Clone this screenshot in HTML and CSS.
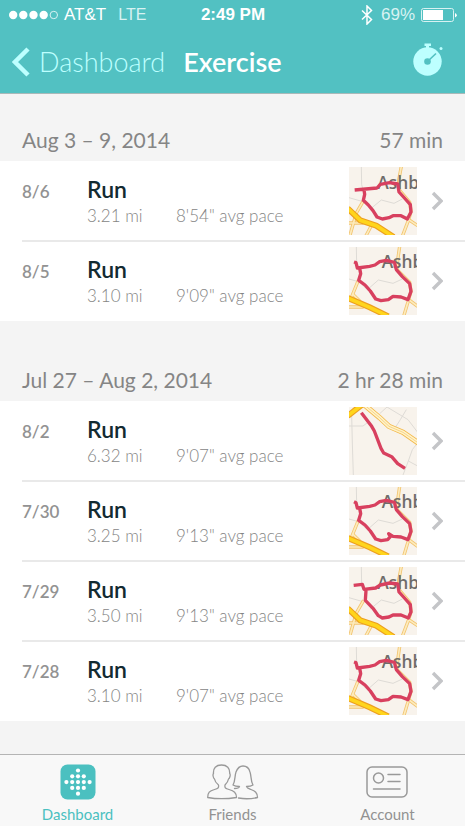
FILE: index.html
```html
<!DOCTYPE html>
<html lang="en">
<head>
    <meta charset="UTF-8">
    <meta name="viewport" content="width=device-width, initial-scale=1.0">
    <title>Exercise</title>
    <link rel="stylesheet" href="styles.css">
</head>
<body>
    <!-- shared map tiles, routes and icons -->
    <svg class="sprite" aria-hidden="true">
        <symbol id="map-west" viewBox="28 22 204 204">
            <rect x="28" y="22" width="204" height="204" fill="#f8f3ec"/>
            <path class="street" d="M65 22L66 75L70 90M28 114L70 126M92 148L125 121L163 131L188 118"/>
            <path class="road-edge" d="M185 20L177 62L178 90L210 128L214 155L207 180L188 230M207 180L234 198M72 122L50 160L30 230M28 190H72M48 162L68 190M95 198L78 230"/>
            <path class="road" d="M185 20L177 62L178 90L210 128L214 155L207 180L188 230M207 180L234 198M72 122L50 160L30 230M28 190H72M48 162L68 190M95 198L78 230"/>
            <path class="highway-edge" d="M24 146L62 182L110 198L162 232"/>
            <path class="highway" d="M24 146L62 182L110 198L162 232"/>
        </symbol>
        <symbol id="map-east" viewBox="28 22 204 204">
            <rect x="28" y="22" width="204" height="204" fill="#f8f3ec"/>
            <path class="street" d="M50 22L51 75M28 118L56 126M78 136L90 144L116 121L160 131L188 118M66 134L120 185"/>
            <path class="road-edge" d="M180 20L174 62L172 90L210 128L214 155L207 180L192 230M207 180L234 200M56 122L30 186M40 164L62 186M28 202H72"/>
            <path class="road" d="M180 20L174 62L172 90L210 128L214 155L207 180L192 230M207 180L234 200M56 122L30 186M40 164L62 186M28 202H72"/>
            <path class="highway-edge" d="M24 175L90 203L146 230"/>
            <path class="highway" d="M24 175L90 203L146 230"/>
        </symbol>
        <symbol id="map-long" viewBox="28 22 204 204">
            <rect x="28" y="22" width="204" height="204" fill="#f8f3ec"/>
            <path class="street" d="M36 46L38 130L41 226M28 79H70L86 67M120 42L142 22L205 60L234 98M200 30L182 60L168 82M232 132L218 150L206 184L190 226M206 184L232 198"/>
            <path class="avenue-edge" d="M72 14L120 54L148 80L190 98L236 130"/>
            <path class="avenue" d="M72 14L120 54L148 80L190 98L236 130"/>
            <path class="avenue-line" d="M72 14L120 54L148 80L190 98L236 130"/>
            <path class="highway-edge" d="M24 49L66 16"/>
            <path class="highway" d="M24 49L66 16"/>
        </symbol>
        <symbol id="route-loop-east" viewBox="28 22 204 204">
            <path class="route" d="M43 67L49 69L53 85L90 80L106 76L120 66L140 62L164 68L170 90L188 111L210 132L214 155L205 180L184 172L160 170L146 180L124 183L108 178L92 154L76 136L57 122L63 102L60 86"/>
        </symbol>
        <symbol id="icon-chevron" viewBox="0 0 12 20">
            <path d="M2 2L10 10L2 18" fill="none" stroke="#c4c5c8" stroke-width="3.4"/>
        </symbol>
    </svg>

    <header class="top-bar">
        <div class="status-bar">
            <div class="status-left">
                <svg class="signal" viewBox="0 0 49 10" role="img" aria-label="Signal, 4 of 5">
                    <g fill="#fff">
                        <circle cx="4.2" cy="5" r="4.2"/>
                        <circle cx="14.3" cy="5" r="4.2"/>
                        <circle cx="24.5" cy="5" r="4.2"/>
                        <circle cx="34.7" cy="5" r="4.2"/>
                    </g>
                    <circle cx="44.8" cy="5" r="3.7" fill="none" stroke="#d8f2f2"/>
                </svg>
                <span>AT&amp;T</span>
                <span class="network">LTE</span>
            </div>
            <div class="clock">2:49 PM</div>
            <div class="status-right">
                <svg class="bluetooth" viewBox="0 0 12 20" aria-hidden="true">
                    <path d="M1 5.5L10.5 14.5L6 19V1L10.5 5.5L1 14.5" fill="none" stroke="#fff" stroke-width="1.5"/>
                </svg>
                <span class="percent">69%</span>
                <svg class="battery" viewBox="0 0 36 14" role="img" aria-label="Battery">
                    <rect x="0.5" y="0.5" width="32" height="13" rx="2" fill="none" stroke="#d8f2f2"/>
                    <rect x="2" y="2" width="20" height="10" fill="#fff"/>
                    <path d="M34 5V9.5Q35.8 8.5 35.8 7.2Q35.8 6 34 5Z" fill="#fff"/>
                </svg>
            </div>
        </div>
        <nav class="nav-bar">
            <a class="back" href="#">
                <svg viewBox="0 0 18 30" aria-hidden="true">
                    <path d="M16 2L3 15L16 28" fill="none" stroke="#bdffff" stroke-width="4.5"/>
                </svg>
                Dashboard
            </a>
            <h1>Exercise</h1>
            <button class="timer" type="button" aria-label="Start timer">
                <svg viewBox="0 0 30 33" aria-hidden="true">
                    <circle cx="14.5" cy="18.5" r="14.2" fill="#bdffff"/>
                    <path d="M11.500 0.500H18V3H16V5.500H13V3H11.500Z" fill="#bdffff"/>
                    <circle cx="28" cy="5.5" r="1.5" fill="#bdffff"/>
                    <path d="M14.5 18.5L23 10.5" stroke="#52c1c2" stroke-width="1.6"/>
                    <circle cx="14.5" cy="18.5" r="3.3" fill="#52c1c2"/>
                </svg>
            </button>
        </nav>
    </header>

    <main>
        <section>
            <div class="week">
                <h2>Aug 3 – 9, 2014</h2>
                <span>57 min</span>
            </div>
            <ul class="runs">
                <li>
                    <a class="run" href="#">
                        <span class="date">8/6</span>
                        <span class="info">
                            <strong>Run</strong>
                            <span>3.21 mi</span>
                            <span>8'54" avg pace</span>
                        </span>
                        <svg class="map" viewBox="28 22 204 204" aria-hidden="true">
                            <use href="#map-west" x="28" y="22" width="204" height="204"/>
                            <text class="place" x="113" y="88">Ashb</text>
                            <path class="route" d="M45 91L112 85L122 74L150 69L174 73L178 97L197 118L212 135L214 157L203 178L184 168L160 168L148 174L128 178L112 172L100 153L86 136L71 122L75 104L73 90"/>
                        </svg>
                        <svg class="chevron" aria-hidden="true"><use href="#icon-chevron"/></svg>
                    </a>
                </li>
                <li>
                    <a class="run" href="#">
                        <span class="date">8/5</span>
                        <span class="info">
                            <strong>Run</strong>
                            <span>3.10 mi</span>
                            <span>9'09" avg pace</span>
                        </span>
                        <svg class="map" viewBox="28 22 204 204" aria-hidden="true">
                            <use href="#map-east" x="28" y="22" width="204" height="204"/>
                            <text class="place" x="126" y="85">Ashb</text>
                            <use href="#route-loop-east" x="28" y="22" width="204" height="204"/>
                        </svg>
                        <svg class="chevron" aria-hidden="true"><use href="#icon-chevron"/></svg>
                    </a>
                </li>
            </ul>
        </section>

        <section>
            <div class="week">
                <h2>Jul 27 – Aug 2, 2014</h2>
                <span>2 hr 28 min</span>
            </div>
            <ul class="runs">
                <li>
                    <a class="run" href="#">
                        <span class="date">8/2</span>
                        <span class="info">
                            <strong>Run</strong>
                            <span>6.32 mi</span>
                            <span>9'07" avg pace</span>
                        </span>
                        <svg class="map" viewBox="28 22 204 204" aria-hidden="true">
                            <use href="#map-long" x="28" y="22" width="204" height="204"/>
                            <path class="route" d="M65 39L96 80L104 94L124 146L132 160L156 171L174 192L196 206"/>
                        </svg>
                        <svg class="chevron" aria-hidden="true"><use href="#icon-chevron"/></svg>
                    </a>
                </li>
                <li>
                    <a class="run" href="#">
                        <span class="date">7/30</span>
                        <span class="info">
                            <strong>Run</strong>
                            <span>3.25 mi</span>
                            <span>9'13" avg pace</span>
                        </span>
                        <svg class="map" viewBox="28 22 204 204" aria-hidden="true">
                            <use href="#map-east" x="28" y="22" width="204" height="204"/>
                            <text class="place" x="126" y="85">Ashb</text>
                            <path class="route" d="M43 66L49 69L53 85L90 80L106 76L120 66L140 62L164 68L170 90L188 111L210 132L214 155L205 180L184 172L160 170L147 162L152 171L144 180L124 183L108 178L92 154L76 136L57 122L63 102L60 86"/>
                        </svg>
                        <svg class="chevron" aria-hidden="true"><use href="#icon-chevron"/></svg>
                    </a>
                </li>
                <li>
                    <a class="run" href="#">
                        <span class="date">7/29</span>
                        <span class="info">
                            <strong>Run</strong>
                            <span>3.50 mi</span>
                            <span>9'13" avg pace</span>
                        </span>
                        <svg class="map" viewBox="28 22 204 204" aria-hidden="true">
                            <use href="#map-west" x="28" y="22" width="204" height="204"/>
                            <text class="place" x="113" y="88">Ashb</text>
                            <path class="route" d="M42 77L68 74L73 89L108 85L122 76L150 70L174 73L178 97L197 118L212 135L214 157L206 175L184 166L160 166L148 172L128 175L116 168L100 146L77 122L79 92"/>
                        </svg>
                        <svg class="chevron" aria-hidden="true"><use href="#icon-chevron"/></svg>
                    </a>
                </li>
                <li>
                    <a class="run" href="#">
                        <span class="date">7/28</span>
                        <span class="info">
                            <strong>Run</strong>
                            <span>3.10 mi</span>
                            <span>9'07" avg pace</span>
                        </span>
                        <svg class="map" viewBox="28 22 204 204" aria-hidden="true">
                            <use href="#map-east" x="28" y="22" width="204" height="204"/>
                            <text class="place" x="126" y="85">Ashb</text>
                            <use href="#route-loop-east" x="28" y="22" width="204" height="204"/>
                        </svg>
                        <svg class="chevron" aria-hidden="true"><use href="#icon-chevron"/></svg>
                    </a>
                </li>
            </ul>
        </section>
    </main>

    <nav class="tab-bar">
        <a class="tab active" href="#">
            <svg viewBox="0 0 52 36" aria-hidden="true">
                <rect x="8.5" y="0.5" width="35" height="35" rx="7" fill="#4bc0c0"/>
                <g fill="#fff">
                    <circle cx="26" cy="6.5" r="2.1"/>
                    <circle cx="20.2" cy="12.3" r="2.1"/>
                    <circle cx="26" cy="12.3" r="2.1"/>
                    <circle cx="31.8" cy="12.3" r="2.1"/>
                    <circle cx="14.4" cy="18.1" r="2.1"/>
                    <circle cx="20.2" cy="18.1" r="2.1"/>
                    <circle cx="26" cy="18.1" r="2.1"/>
                    <circle cx="31.8" cy="18.1" r="2.1"/>
                    <circle cx="37.6" cy="18.1" r="2.1"/>
                    <circle cx="20.2" cy="23.9" r="2.1"/>
                    <circle cx="26" cy="23.9" r="2.1"/>
                    <circle cx="31.8" cy="23.9" r="2.1"/>
                    <circle cx="26" cy="29.7" r="2.1"/>
                </g>
            </svg>
            Dashboard
        </a>
        <a class="tab" href="#">
            <svg viewBox="0 0 52 36" aria-hidden="true">
                <g fill="none" stroke="#999" stroke-width="1.3" stroke-linejoin="round" stroke-linecap="round">
                    <path d="M14.5 1C9 1 6 4 6.500 9.500C5.500 10.500 6.200 14 7.500 15C8 18 9.500 19.500 11.500 21C12 24 11 24.500 7.500 25.500C2.500 27 0.700 28.500 0.700 33.500C9 35 20 35 29.500 33.500C29.500 28.500 27 27 22 25.500C18.500 24.500 17.500 24 18 21C19.500 19.500 21 18 21.500 15C23 14 23.700 10.500 22.700 9.500C23 4 20 1 14.500 1Z"/>
                    <path d="M27.500 24.500C30.500 24.500 32 24 32.500 22.500C30 22.500 27.500 22 26 21C28.500 17 27.500 12 29 8C30.500 4 32.500 2 36 2C40 2 42 4 43 8C44.500 12 43.500 17 46 21C44.500 22 42 22.500 39.500 22.500C40 24 41.500 24.500 44 25.500C48 27 50.500 28.500 50.500 33.500C44 35 37 35 31.500 34"/>
                </g>
            </svg>
            Friends
        </a>
        <a class="tab" href="#">
            <svg viewBox="0 0 52 36" aria-hidden="true">
                <g fill="none" stroke="#999" stroke-width="1.5" stroke-linecap="round">
                    <rect x="5" y="3" width="40" height="30" rx="5"/>
                    <circle cx="16.500" cy="14" r="5"/>
                    <path d="M26 10.500H38M26 17.500H38M11.500 25H38"/>
                </g>
            </svg>
            Account
        </a>
    </nav>
</body>
</html>
```
FILE: styles.css
```css
* {
    box-sizing: border-box;
}

body {
    margin: 0;
    min-height: 100vh;
    display: flex;
    flex-direction: column;
    font-family: Lato, 'Open Sans', sans-serif;
    background: #f4f4f4;
    color: #858585;
}

a {
    color: inherit;
    text-decoration: none;
}

.sprite {
    position: absolute;
    width: 0;
    height: 0;
}

/* header */
.top-bar {
    background: #52c1c2;
    border-bottom: 1px solid #a9b9b9;
}

.status-bar {
    display: grid;
    grid-template-columns: 1fr auto 1fr;
    align-items: center;
    height: 30px;
    padding: 0 8px 0 9px;
    font-family: 'Liberation Sans', Arial, sans-serif;
    font-size: 17px;
    color: #fff;
}

.status-left,
.status-right {
    display: flex;
    align-items: center;
}

.status-right {
    justify-content: flex-end;
}

.signal {
    width: 49px;
    height: 10px;
    margin-right: 6px;
}

.network {
    margin-left: 12px;
    font-size: 16px;
    color: #d8f2f2;
}

.clock {
    font-weight: bold;
}

.bluetooth {
    width: 12px;
    height: 20px;
    margin-right: 8px;
}

.percent {
    color: #d8f2f2;
}

.battery {
    width: 36px;
    height: 14px;
    margin-left: 6px;
}

.nav-bar {
    display: flex;
    align-items: center;
    height: 63px;
    padding: 0 22px 0 12px;
}

.back {
    display: flex;
    align-items: center;
    font-size: 27px;
    font-weight: 300;
    color: #bdffff;
}

.back svg {
    width: 18px;
    height: 30px;
    margin-right: 9px;
}

.nav-bar h1 {
    margin: 0 0 0 18px;
    font-size: 27px;
    font-weight: 600;
    color: #fff;
}

.timer {
    margin-left: auto;
    padding: 0 0 4px;
    border: none;
    background: none;
    cursor: pointer;
}

.timer svg {
    display: block;
    width: 30px;
    height: 33px;
}

/* run list */
main {
    flex: 1;
}

.week {
    display: flex;
    justify-content: space-between;
    align-items: flex-end;
    height: 80px;
    padding: 0 22px 8px;
    font-size: 21px;
    line-height: 26px;
}

section:first-child .week {
    height: 67px;
}

.week h2 {
    margin: 0;
    font-size: 21px;
    font-weight: 400;
}

.runs {
    margin: 0;
    padding: 0 0 1px 22px;
    list-style: none;
    background: #fff;
}

.runs li + li {
    border-top: 2px solid #e9e9e9;
}

.run {
    display: flex;
    align-items: center;
    height: 78px;
    padding-right: 22px;
}

.runs li:first-child {
    padding-top: 1px;
}

.date {
    width: 65px;
    padding-bottom: 20px;
    font-size: 17px;
    font-weight: 600;
    color: #929292;
}

.info {
    flex: 1;
    display: grid;
    grid-template-columns: 89px 1fr;
    font-size: 17px;
    font-weight: 300;
    line-height: 24px;
    color: #858585;
}

.info strong {
    grid-column: 1 / -1;
    font-size: 23px;
    font-weight: 600;
    line-height: 30px;
    color: #132b31;
}

.map {
    width: 68px;
    height: 68px;
}

.chevron {
    width: 12px;
    height: 20px;
    margin-left: 14px;
}

/* map drawing */
.street {
    fill: none;
    stroke: #dedbd6;
    stroke-width: 3;
}

.road-edge {
    fill: none;
    stroke: #f2c46f;
    stroke-width: 10;
}

.road {
    fill: none;
    stroke: #fdebbd;
    stroke-width: 5;
}

.avenue-edge {
    fill: none;
    stroke: #f3b84a;
    stroke-width: 16;
}

.avenue {
    fill: none;
    stroke: #fff3c9;
    stroke-width: 11;
}

.avenue-line {
    fill: none;
    stroke: #f3c368;
    stroke-width: 2;
}

.highway-edge {
    fill: none;
    stroke: #eda01f;
    stroke-width: 18;
}

.highway {
    fill: none;
    stroke: #ffd51c;
    stroke-width: 11;
}

.place {
    font-family: 'Open Sans', sans-serif;
    font-size: 52px;
    font-weight: 600;
    fill: #6f6c6a;
}

.route {
    fill: none;
    stroke: #d8405f;
    stroke-width: 10;
    stroke-linejoin: round;
}

/* bottom tabs */
.tab-bar {
    position: sticky;
    bottom: 0;
    display: flex;
    height: 72px;
    border-top: 1px solid #b4b4b4;
    background: #f8f8f8;
}

.tab {
    flex: 1;
    display: flex;
    flex-direction: column;
    align-items: center;
    padding-top: 9px;
    font-size: 15px;
    line-height: 24px;
    color: #929292;
}

.tab svg {
    width: 52px;
    height: 36px;
    margin-bottom: 2px;
}

.tab.active {
    color: #4bc0c0;
}
```
